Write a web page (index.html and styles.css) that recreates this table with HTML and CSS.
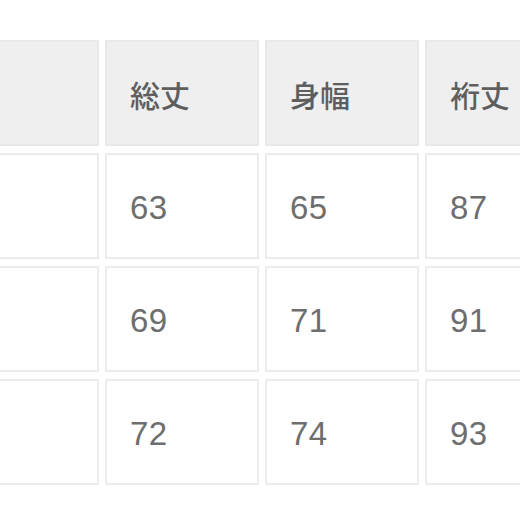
FILE: index.html
```html
<!DOCTYPE html>
<html lang="ja">
<head>
<meta charset="utf-8">
<link rel="stylesheet" href="styles.css">
</head>
<body>
<div class="frame">
  <div class="size-table">
    <div class="cell head"></div>
    <div class="cell head">総丈</div>
    <div class="cell head">身幅</div>
    <div class="cell head">裄丈</div>

    <div class="cell"></div>
    <div class="cell">63</div>
    <div class="cell">65</div>
    <div class="cell">87</div>

    <div class="cell"></div>
    <div class="cell">69</div>
    <div class="cell">71</div>
    <div class="cell">91</div>

    <div class="cell"></div>
    <div class="cell">72</div>
    <div class="cell">74</div>
    <div class="cell">93</div>
  </div>
</div>
</body>
</html>
```
FILE: styles.css
```css
html, body {
  margin: 0;
  padding: 0;
  background: #ffffff;
}

.frame {
  width: 520px;
  height: 520px;
  overflow: hidden;
}

.size-table {
  display: grid;
  grid-template-columns: repeat(4, 154px);
  grid-auto-rows: 106px;
  column-gap: 6px;
  row-gap: 7px;
  margin-top: 40px;
  margin-left: -55px;
}

.cell {
  box-sizing: border-box;
  border: 2px solid #ececec;
  background: #ffffff;
  display: flex;
  align-items: center;
  padding-left: 23px;
  padding-top: 3px;
  color: #6e6e6e;
  font-family: "Liberation Sans", Arial, sans-serif;
  font-size: 33px;
  letter-spacing: 0.5px;
}

.cell.head {
  background: #efefef;
  border-color: #e9e9e9;
  padding-top: 2px;
  font-family: "Noto Sans CJK JP", "Liberation Sans", sans-serif;
  font-size: 30px;
  font-weight: 500;
  letter-spacing: 0;
  color: #5e5e5e;
}
```
